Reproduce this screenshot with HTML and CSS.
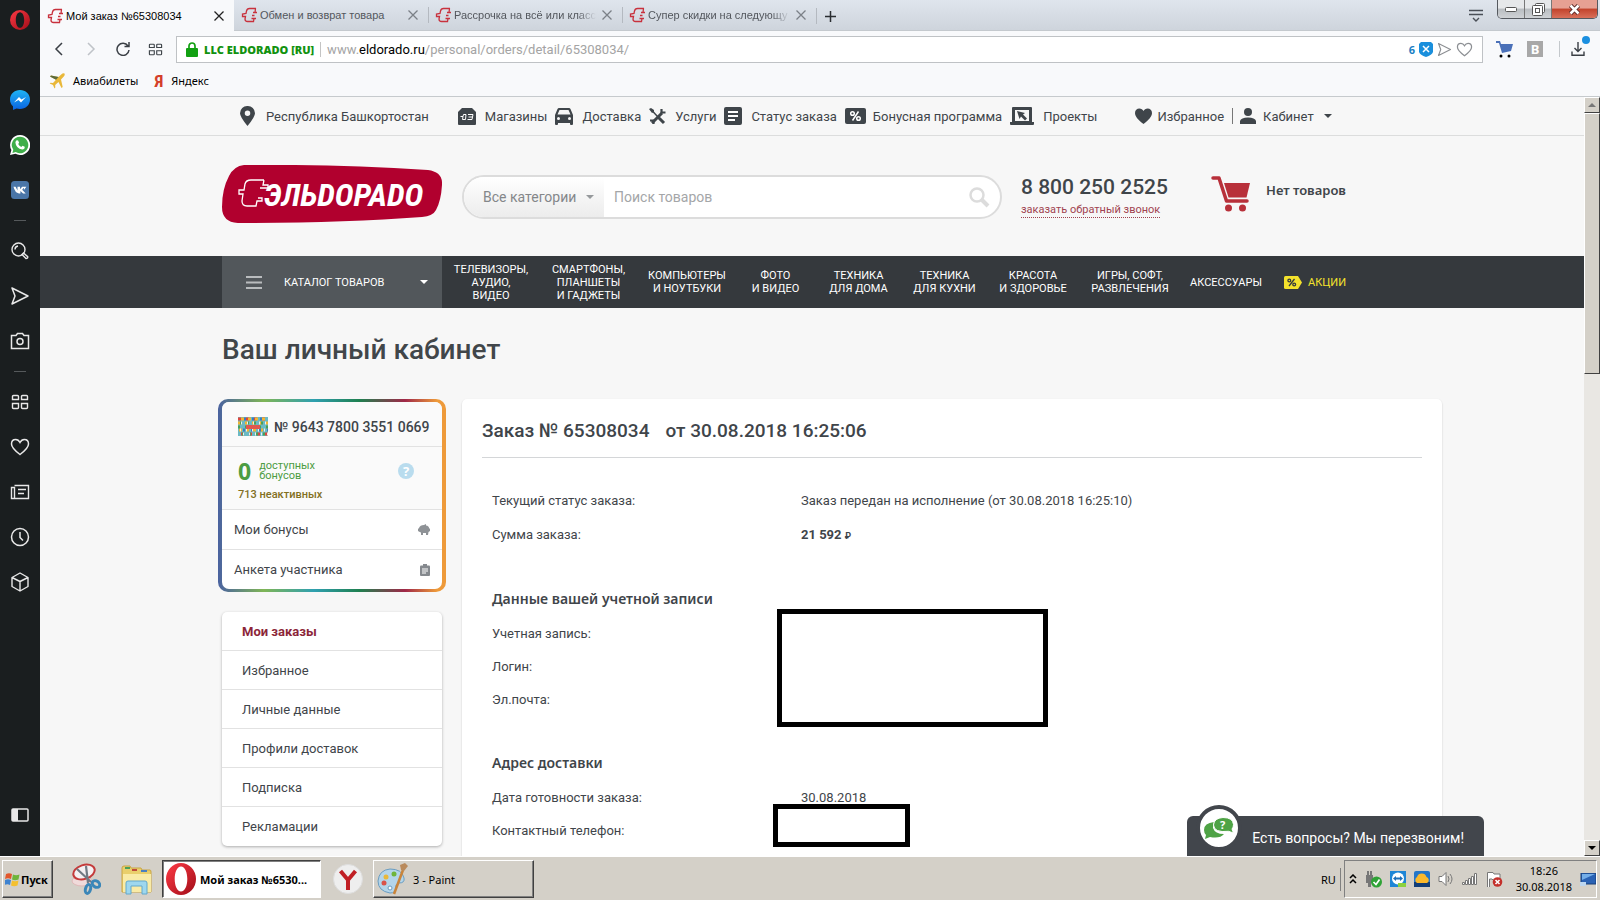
FILE: index.html
```html
<!DOCTYPE html>
<html lang="ru">
<head>
<meta charset="utf-8">
<title>Мой заказ №65308034</title>
<link rel="stylesheet" href="styles.css">
</head>
<body>
<svg class="defs" width="0" height="0" aria-hidden="true">
  <defs>
    <linearGradient id="gOpera" x1="0" y1="0" x2="1" y2="1"><stop offset="0" stop-color="#ff3a45"/><stop offset="1" stop-color="#a00d18"/></linearGradient>
    <linearGradient id="gMsg" x1="0" y1="0" x2="0" y2="1"><stop offset="0" stop-color="#1fb4f5"/><stop offset="1" stop-color="#0a62e0"/></linearGradient>
    <symbol id="opera" viewBox="0 0 20 20"><path fill="url(#gOpera)" fill-rule="evenodd" d="M10 0a10 10 0 1 0 0 20a10 10 0 1 0 0-20zM10 2.200c2.600 0 4.200 3.600 4.200 7.800s-1.600 7.800-4.200 7.800s-4.200-3.600-4.200-7.800s1.600-7.800 4.200-7.800z"/></symbol>
    <symbol id="plug" viewBox="0 0 17 16"><path fill="none" stroke="#c8313d" stroke-width="1.300" d="M15 1.500H8.500Q6 1.500 5.500 4L5 6.500L1.500 7V9.500H4.500L4 12Q4 14.500 6.500 14.500H12.500L13 11.500H15M13 11.500H10.500M12 5.500H16M14.500 1.500L14 5.500M13.500 8.500H11"/></symbol>
    <symbol id="cross" viewBox="0 0 12 12"><path fill="none" stroke="currentColor" stroke-width="1.300" d="M1.500 1.500l9 9m0-9l-9 9"/></symbol>
    <symbol id="grid4" viewBox="0 0 18 16"><path fill="none" stroke="currentColor" stroke-width="1.400" d="M2.500 1.500h4q1 0 1 1v3h-6v-3q0-1 1-1zM11.500 1.500h4q1 0 1 1v3h-6v-3q0-1 1-1zM1.500 9.500h6v4q0 1-1 1h-4q-1 0-1-1zM10.500 9.500h6v4q0 1-1 1h-4q-1 0-1-1z"/></symbol>
    <symbol id="send" viewBox="0 0 20 20"><path fill="none" stroke="currentColor" stroke-width="1.500" stroke-linejoin="round" d="M2 2l16 8l-16 8l3-8z"/></symbol>
    <symbol id="heart" viewBox="0 0 20 18"><path fill="none" stroke="currentColor" stroke-width="1.500" d="M10 16.500C4 12 1.500 9.500 1.500 6C1.500 3 3.500 1.500 5.700 1.500C8 1.500 9.200 3 10 4.500C10.800 3 12 1.500 14.300 1.500C16.500 1.500 18.500 3 18.500 6C18.500 9.500 16 12 10 16.500z"/></symbol>
    <symbol id="heartFull" viewBox="0 0 17 16"><path fill="currentColor" d="M8.500 16C3 11.500 0 8.500 0 5C0 2 2 .5 4.300 .5C6.300 .5 7.700 1.500 8.500 3C9.300 1.500 10.700 .5 12.700 .5C15 .5 17 2 17 5C17 8.500 14 11.500 8.500 16z"/></symbol>
  </defs>
</svg>
<div class="desktop">
  <div class="browser">
    <aside class="rail">
      <button class="slot slot-top" aria-label="Opera"><svg width="20" height="20"><use href="#opera"/></svg></button>
      <button class="slot" aria-label="Messenger"><svg width="20" height="20" viewBox="0 0 20 20"><path fill="url(#gMsg)" d="M10 0C4.400 0 0 4 0 9.500c0 3 1 5 3 6.800V20l3.500-1.500c1 .3 2.200.5 3.500.5c5.600 0 10-4 10-9.500S15.600 0 10 0z"/><path fill="#fff" d="M4 12.500L9 7l2.500 2.500L16 7l-5 5.500L8.500 10z"/></svg></button>
      <button class="slot" aria-label="WhatsApp"><svg width="20" height="20" viewBox="0 0 20 20"><path fill="#fff" d="M10 0a10 10 0 1 1-4.600 18.800L0 20l1.400-5A10 10 0 0 1 10 0z"/><path fill="#3fae49" d="M10 1.700a8.300 8.300 0 1 1-4.300 15.400L2.400 17.900l.9-3.100A8.300 8.300 0 0 1 10 1.700z"/><path fill="#fff" d="M6.800 5.300l1.300.1l1 2.300l-.9 1.300q1 2 3.100 2.900l1.200-1.200l2.200 1.100q.2 2.600-2.500 2.700Q6 13.500 5.400 7.500q.3-1.600 1.400-2.200z"/></svg></button>
      <button class="slot" aria-label="VK"><svg width="18" height="18" viewBox="0 0 18 18"><rect width="18" height="18" rx="3.500" fill="#4a76a8"/><path fill="#fff" d="M2.500 5.800h2l2 3.700V5.800H9v2.500l2.200-2.500h2.300l-2.300 3l3.500 3.600h-2.600L9.400 10.100v2.300H8Q4 12 2.500 5.800zM13 5.800h2.400l-2.500 3.300z"/></svg></button>
      <span class="rail-line"></span>
      <button class="slot" aria-label="Поиск"><svg width="18" height="18" viewBox="0 0 18 18" fill="none" stroke="#e8e8e8" stroke-width="1.400"><circle cx="7.500" cy="7.500" r="6.500"/><path d="M4 7.500Q4 4.500 7 4M11 12.500l4 4q2 0 1.700-1.800L12.500 11z"/></svg></button>
      <button class="slot" aria-label="Моя лента"><svg width="20" height="20"><use href="#send"/></svg></button>
      <button class="slot" aria-label="Снимок"><svg width="20" height="18" viewBox="0 0 20 18" fill="none" stroke="#e8e8e8" stroke-width="1.500"><path d="M1.500 3.500H6L7.500 1.500h5L14 3.500h4.500v13h-17z"/><circle cx="10" cy="9.500" r="3"/></svg></button>
      <span class="rail-line"></span>
      <button class="slot" aria-label="Экспресс-панель"><svg width="18" height="16"><use href="#grid4"/></svg></button>
      <button class="slot" aria-label="Закладки"><svg width="20" height="18"><use href="#heart"/></svg></button>
      <button class="slot" aria-label="Новости"><svg width="20" height="16" viewBox="0 0 20 16" fill="none" stroke="#e8e8e8" stroke-width="1.400"><path d="M4.500 1.500h14v13h-17v-11h3v11M8 5.500h8M8 9.500h6"/></svg></button>
      <button class="slot" aria-label="История"><svg width="20" height="20" viewBox="0 0 20 20" fill="none" stroke="#e8e8e8" stroke-width="1.500"><circle cx="10" cy="10" r="8.500"/><path d="M10 5v5.500l3 3"/></svg></button>
      <button class="slot" aria-label="Расширения"><svg width="20" height="20" viewBox="0 0 20 20" fill="none" stroke="#e8e8e8" stroke-width="1.400" stroke-linejoin="round"><path d="M10 1l8 4.500v9L10 19l-8-4.500v-9zM2 5.500l8 4l8-4M10 9.500V19"/></svg></button>
      <button class="slot slot-bottom" aria-label="Боковая панель"><svg width="18" height="14" viewBox="0 0 18 14"><rect x="1" y="1" width="16" height="12" rx="1" fill="none" stroke="#e8e8e8" stroke-width="1.500"/><path fill="#e8e8e8" d="M1 1h6v12H1z"/></svg></button>
    </aside>
    <div class="window">
      <header class="tabs">
        <div class="tab tab-on"><svg width="17" height="16"><use href="#plug"/></svg><span class="tab-name">Мой заказ №65308034</span><button class="tab-x" aria-label="Закрыть"><svg width="12" height="12"><use href="#cross"/></svg></button></div>
        <div class="tab"><svg width="17" height="16"><use href="#plug"/></svg><span class="tab-name">Обмен и возврат товара</span><button class="tab-x" aria-label="Закрыть"><svg width="12" height="12"><use href="#cross"/></svg></button></div>
        <div class="tab tab-line"><svg width="17" height="16"><use href="#plug"/></svg><span class="tab-name tab-fade">Рассрочка на всё или класс</span><button class="tab-x" aria-label="Закрыть"><svg width="12" height="12"><use href="#cross"/></svg></button></div>
        <div class="tab tab-line"><svg width="17" height="16"><use href="#plug"/></svg><span class="tab-name tab-fade">Супер скидки на следующу</span><button class="tab-x" aria-label="Закрыть"><svg width="12" height="12"><use href="#cross"/></svg></button></div>
        <button class="tab-add" aria-label="Новая вкладка"><svg width="11" height="11" viewBox="0 0 11 11"><path stroke="#2a2d31" stroke-width="1.500" d="M5.500 0v11M0 5.500h11"/></svg></button>
        <button class="tab-menu" aria-label="Меню вкладок"><svg width="14" height="13" viewBox="0 0 14 13" fill="none" stroke="#4a4f57" stroke-width="1.400"><path d="M0 1.500h14M0 5.500h14M4 9l3 3l3-3"/></svg></button>
        <div class="win-controls">
          <button class="wc" aria-label="Свернуть"><svg width="12" height="5" viewBox="0 0 12 5"><rect x=".5" y=".5" width="11" height="4" rx="1" fill="#fff" stroke="#555"/></svg></button>
          <button class="wc" aria-label="Развернуть"><svg width="13" height="13" viewBox="0 0 13 13" fill="#fff" stroke="#555"><rect x="3.500" y=".5" width="9" height="9" rx="1"/><rect x=".5" y="2.500" width="10" height="10" rx="1"/><rect x="3.500" y="5.500" width="4" height="4"/></svg></button>
          <button class="wc wc-close" aria-label="Закрыть окно"><svg width="13" height="11" viewBox="0 0 13 11"><path stroke="#5c2a28" stroke-width="4.500" d="M2.500 1.500l8 8m0-8l-8 8"/><path stroke="#fff" stroke-width="2.500" d="M2.500 1.500l8 8m0-8l-8 8"/></svg></button>
        </div>
      </header>
      <div class="address-row">
        <div class="nav-buttons">
          <button aria-label="Назад"><svg width="10" height="14" viewBox="0 0 10 14"><path fill="none" stroke="#3a3f45" stroke-width="1.500" d="M8 1L2 7l6 6"/></svg></button>
          <button aria-label="Вперёд"><svg width="10" height="14" viewBox="0 0 10 14"><path fill="none" stroke="#bfc3c8" stroke-width="1.500" d="M2 1l6 6l-6 6"/></svg></button>
          <button aria-label="Обновить"><svg width="14" height="14" viewBox="0 0 14 14"><path fill="none" stroke="#3a3f45" stroke-width="1.500" d="M12 4A6 6 0 1 0 13 8M13 0v4.500H8.500"/></svg></button>
          <button aria-label="Экспресс"><svg width="15" height="13"><use href="#grid4"/></svg></button>
        </div>
        <div class="url">
          <svg width="12" height="15" viewBox="0 0 12 15"><path fill="none" stroke="#12a012" stroke-width="1.700" d="M3 7V4a3 3 0 0 1 6 0v3"/><rect y="6" width="12" height="9" rx="1" fill="#12a012"/></svg>
          <span class="cert">LLC ELDORADO [RU]</span>
          <span class="url-text">www.<b>eldorado.ru</b>/personal/orders/detail/65308034/</span>
          <span class="url-tools">
            <span class="blocked">6</span>
            <svg width="14" height="15" viewBox="0 0 14 15"><path fill="#1a8fdc" d="M2 0h10l2 2v8q-1 3-7 5Q1 13 0 10V2z"/><path stroke="#fff" stroke-width="1.500" d="M4 4l6 6m0-6l-6 6"/></svg>
            <svg class="grey" width="15" height="15"><use href="#send"/></svg>
            <svg class="grey" width="17" height="15"><use href="#heart"/></svg>
          </span>
        </div>
        <div class="ext">
          <svg width="17" height="17" viewBox="0 0 17 17"><path fill="#4a70b8" d="M0 0h4l1 3h12l-2 7L6 12L3 2H0z"/><circle cx="5" cy="15" r="1.500"/><circle cx="13" cy="15" r="1.500"/></svg>
          <span class="ext-b">B</span>
          <span class="ext-line"></span>
          <span class="dl"><svg width="14" height="14" viewBox="0 0 14 14" fill="none" stroke="#3a3f45" stroke-width="1.400"><path d="M7 0v9M3.500 6L7 9.500L10.500 6M1 9.500v3.800h12V9.500"/></svg><i class="dot"></i></span>
        </div>
      </div>
      <nav class="bookmarks">
        <a href="#"><svg width="16" height="16" viewBox="0 0 16 16"><path fill="#e9b83a" d="M15.500.5q-1.500-.8-3 .7L9.500 4L2 2.500L1 3.500l6 3.200l-3 3.300l-2.500-.2l-.8.8L4 12l1.500 3.400l.8-.8L6.200 12L9.500 9l3 6l1.200-1L12 6.500l2.800-3Q16.200 2 15.500.5z"/><path fill="#5b6b3c" d="M9.500 4L2 2.500l-1 1l6 3.200z"/></svg>Авиабилеты</a>
        <a href="#"><span class="ya">Я</span>Яндекс</a>
      </nav>
      <div class="viewport">
        <div class="page">
          <div class="topbar">
            <a href="#" class="city"><svg width="15" height="20" viewBox="0 0 15 20"><path fill="#3f454a" fill-rule="evenodd" d="M7.500 0A7.300 7.300 0 0 1 15 7.300Q15 11 7.500 20Q0 11 0 7.300A7.300 7.300 0 0 1 7.500 0zM7.500 4.500a2.700 2.700 0 1 0 0 5.500a2.700 2.700 0 1 0 0-5.500z"/></svg>Республика Башкортостан</a>
            <a href="#"><svg width="18" height="17" viewBox="0 0 18 17"><path fill="#3f454a" d="M4 0h10l4 4v12q0 1-1 1H1q-1 0-1-1V4z"/><path fill="none" stroke="#fff" d="M8 6.500H5.500L5 8.500H2.500M5 8.500L4.500 11.500H7.500L8 6.500M10 6.500H15L14 11.500H9.500M10.500 9h4"/></svg>Магазины</a>
            <a href="#"><svg width="18" height="17" viewBox="0 0 18 17"><path fill="#3f454a" fill-rule="evenodd" d="M4 0h10q1 0 1.500 1L18 7v9q0 1-1 1h-1q-1 0-1-1v-1H3v1q0 1-1 1H1q-1 0-1-1V7l2.500-6Q3 0 4 0zM4.500 2L2.500 6.500h13L13.500 2zM3.500 9a1.500 1.500 0 1 0 0 3a1.500 1.500 0 1 0 0-3zM14.500 9a1.500 1.500 0 1 0 0 3a1.500 1.500 0 1 0 0-3z"/></svg>Доставка</a>
            <a href="#"><svg width="17" height="17" viewBox="0 0 17 17"><path stroke="#3f454a" stroke-width="3" d="M3 15L13 5M9 9l6 6"/><path stroke="#3f454a" stroke-width="1.500" d="M2 1.500L9 9"/><path fill="none" stroke="#3f454a" stroke-width="2.200" d="M12.500 1v3.500H16.500M1 12.500h3.500V16"/><path fill="#3f454a" d="M0 1l2-1l3 2v2L3 5z"/></svg>Услуги</a>
            <a href="#" class="wide"><svg width="18" height="18" viewBox="0 0 18 18"><rect width="18" height="18" rx="2" fill="#3f454a"/><path stroke="#fff" stroke-width="2" d="M4 5h10M4 9h10M4 13h7"/></svg>Статус заказа</a>
            <a href="#" class="tight"><svg width="21" height="16" viewBox="0 0 21 16"><rect width="21" height="16" rx="2" fill="#3f454a"/><g fill="none" stroke="#fff" stroke-width="1.500"><circle cx="7.500" cy="5.500" r="1.800"/><circle cx="13.500" cy="10.500" r="1.800"/><path d="M13.500 3.500l-6 9"/></g></svg>Бонусная программа</a>
            <a href="#"><svg width="24" height="18" viewBox="0 0 24 18"><path fill="#3f454a" fill-rule="evenodd" d="M3 0h18q1 0 1 1v14h2v2q0 1-1 1H1q-1 0-1-1v-2h2V1q0-1 1-1zM5 3v11h14V3z"/><path fill="#3f454a" d="M7 4l8 2l-2 1.500l4 4l-2 2l-4-4L9.500 12z"/></svg>Проекты</a>
            <a href="#" class="fav"><svg width="17" height="16" class="dark"><use href="#heartFull"/></svg>Избранное</a>
            <a href="#" class="cabinet"><svg width="16" height="16" viewBox="0 0 16 16"><circle cx="8" cy="4" r="4" fill="#3f454a"/><path fill="#3f454a" d="M0 16v-3q1-3.500 8-3.500t8 3.500v3z"/></svg>Кабинет<i class="caret"></i></a>
          </div>
          <div class="masthead">
            <a href="#" class="logo" aria-label="Эльдорадо"><svg width="220" height="58" viewBox="0 0 220 58"><path fill="#b1002e" d="M22 0Q110-1 206 5Q221 7 220 20Q219 36 214 45Q211 51 200 52Q120 58 20 58Q0 59 0 42Q0 24 7 11Q12 1 22 0z"/><path fill="none" stroke="#fff" stroke-width="1.300" d="M42 15H29Q24 15 23 19L22 25H17V29H21L20 36Q20 41 25 41H34L35 36H40V33H36M42 15L41 20H46V23H38"/><text x="42" y="41" fill="#fff" class="logo-text">ЭЛЬDОРАDО</text></svg></a>
            <form class="search">
              <select aria-label="Категория"><option>Все категории</option></select><i class="caret"></i>
              <input type="text" placeholder="Поиск товаров" aria-label="Поиск товаров">
              <button type="button" aria-label="Найти"><svg width="21" height="21" viewBox="0 0 21 21"><circle cx="8" cy="8" r="6.500" fill="none" stroke="#dcdcdc" stroke-width="2.500"/><path stroke="#dcdcdc" stroke-width="4" d="M12.500 12.500l6.500 6.500"/></svg></button>
            </form>
            <div class="phone"><span class="phone-no">8 800 250 2525</span><a href="#">заказать обратный звонок</a></div>
            <a href="#" class="cart"><svg width="39" height="36" viewBox="0 0 39 36"><path fill="none" stroke="#b8303a" stroke-width="3.500" stroke-linejoin="round" stroke-linecap="round" d="M2 2h6L15.500 25H36"/><path fill="#b8303a" d="M13 7h26l-3.500 14.500H17.500z"/><circle cx="17.500" cy="32" r="3.500" fill="#b8303a"/><circle cx="31.500" cy="32" r="3.500" fill="#b8303a"/></svg><span>Нет товаров</span></a>
          </div>
          <nav class="menu">
            <button class="catalog"><svg width="16" height="13" viewBox="0 0 16 13"><path stroke="#b9bcbe" stroke-width="2" d="M0 1h16M0 6.500h16M0 12h16"/></svg><span>КАТАЛОГ ТОВАРОВ</span><i class="caret"></i></button>
            <div class="menu-items">
              <a href="#">ТЕЛЕВИЗОРЫ,<br>АУДИО,<br>ВИДЕО</a>
              <a href="#">СМАРТФОНЫ,<br>ПЛАНШЕТЫ<br>И ГАДЖЕТЫ</a>
              <a href="#">КОМПЬЮТЕРЫ<br>И НОУТБУКИ</a>
              <a href="#">ФОТО<br>И ВИДЕО</a>
              <a href="#">ТЕХНИКА<br>ДЛЯ ДОМА</a>
              <a href="#">ТЕХНИКА<br>ДЛЯ КУХНИ</a>
              <a href="#">КРАСОТА<br>И ЗДОРОВЬЕ</a>
              <a href="#">ИГРЫ, СОФТ,<br>РАЗВЛЕЧЕНИЯ</a>
              <a href="#">АКСЕССУАРЫ</a>
              <a href="#" class="promo"><svg width="18" height="13" viewBox="0 0 18 13"><path fill="#f4e22c" d="M1.500 0H14l4 6.500l-4 6.500H1.500Q0 13 0 11.500v-10Q0 0 1.500 0z"/><g fill="none" stroke="#35393d" stroke-width="1.300"><circle cx="5.300" cy="4.500" r="1.400"/><circle cx="10.200" cy="8.500" r="1.400"/><path d="M10.500 3l-5.500 7"/></g></svg>АКЦИИ</a>
            </div>
          </nav>
          <main class="content">
            <h1>Ваш личный кабинет</h1>
            <div class="columns">
              <div class="side">
                <section class="bonus">
                  <div class="bonus-in">
                    <div class="card-no"><svg width="30" height="19" viewBox="0 0 30 19"><rect width="30" height="19" fill="#6bb9c4"/><g stroke-width="3" fill="none"><path stroke="#e0453d" stroke-dasharray="3 5" d="M0 2h30M3 17h27"/><path stroke="#f2b632" stroke-dasharray="3 4" d="M3 2h27M0 6h30M1 13h29"/><path stroke="#4a9f58" stroke-dasharray="2 5" d="M2 6h28M4 17h26M0 10h30"/><path stroke="#3a7cc0" stroke-dasharray="2 6" d="M5 13h25M6 2h24"/><path stroke="#eee" stroke-dasharray="1 5" d="M3 6h27M5 17h25M2 13h28"/></g><rect x="8" y="8" width="14" height="4" fill="#e0574f"/></svg>№ 9643 7800 3551 0669</div>
                    <div class="points">
                      <div class="points-row"><b class="zero">0</b><span class="avail">доступных<br>бонусов</span><button class="help" aria-label="Справка">?</button></div>
                      <span class="inactive">713 неактивных</span>
                    </div>
                    <a href="#" class="bonus-link">Мои бонусы<svg width="12" height="11" viewBox="0 0 12 11"><path fill="#8e9296" d="M1 4Q2 1 6 1l2-1v1.500Q11 2 11 4l1 1v2l-1.500 1L10 11H8V9H5v2H3V8.500Q1 7.500 0 7V5z"/></svg></a>
                    <a href="#" class="bonus-link">Анкета участника<svg width="10" height="12" viewBox="0 0 10 12"><rect y="1.500" width="10" height="10.500" rx="1" fill="#85898e"/><rect x="3" width="4" height="3" fill="#85898e"/><path stroke="#fff" d="M2 5h6M2 7h6M2 9h4"/></svg></a>
                  </div>
                </section>
                <nav class="side-menu">
                  <a href="#" class="on">Мои заказы</a>
                  <a href="#">Избранное</a>
                  <a href="#">Личные данные</a>
                  <a href="#">Профили доставок</a>
                  <a href="#">Подписка</a>
                  <a href="#">Рекламации</a>
                </nav>
              </div>
              <section class="order">
                <h2><span>Заказ № 65308034</span><span>от 30.08.2018 16:25:06</span></h2>
                <dl class="status">
                  <dt>Текущий статус заказа:</dt><dd>Заказ передан на исполнение (от 30.08.2018 16:25:10)</dd>
                  <dt>Сумма заказа:</dt><dd class="sum">21 592 <small>₽</small></dd>
                </dl>
                <div class="masked">
                  <h3>Данные вашей учетной записи</h3>
                  <dl>
                    <dt>Учетная запись:</dt><dd></dd>
                    <dt>Логин:</dt><dd></dd>
                    <dt>Эл.почта:</dt><dd></dd>
                  </dl>
                  <i class="box box-account"></i>
                </div>
                <div class="masked">
                  <h3>Адрес доставки</h3>
                  <dl>
                    <dt>Дата готовности заказа:</dt><dd>30.08.2018</dd>
                    <dt>Контактный телефон:</dt><dd></dd>
                  </dl>
                  <i class="box box-phone"></i>
                </div>
              </section>
            </div>
          </main>
          <button class="chat"><span class="chat-ring"><svg width="30" height="22" viewBox="0 0 30 22"><path fill="#4ea345" d="M10 5Q0 6 0 13q0 3 2 5l-1 4l5-2q10 2 14-3q-9 0-11-6q0-4 1-6z"/><path fill="#4ea345" stroke="#fff" d="M19 .5q10 0 10.500 7q0 3-1.500 4.500l1.500 4l-5-1.700Q10 16 9.500 8Q10 1 19 .5z"/><text x="16" y="12" class="chat-q">?</text></svg></span>Есть вопросы? Мы перезвоним!</button>
        </div>
        <div class="scroll"><button aria-label="Вверх"><i class="tri up"></i></button><span class="thumb"></span><button class="down" aria-label="Вниз"><i class="tri"></i></button></div>
      </div>
    </div>
  </div>
  <footer class="taskbar">
    <button class="start"><svg width="15" height="15" viewBox="0 0 15 15"><path fill="#e2572c" d="M1 2q3-1.500 6 0L6 7Q3 5.500 0 7z"/><path fill="#6fb53b" d="M8 2.500q3 1.500 6.500 0l-1 5Q10 9 7 7.500z"/><path fill="#3f83d0" d="M0 8q3-1.500 6 0l-1 5q-2.500-1.500-6 0z"/><path fill="#f4c02e" d="M7 8.500q3 1.500 6.500 0l-1 5Q9 15 6 13.500z"/></svg>Пуск</button>
    <button class="quick" aria-label="Ножницы"><svg width="30" height="32" viewBox="0 0 30 32"><ellipse cx="11" cy="18" rx="10" ry="5" fill="#f0dada" stroke="#e0b8b8"/><ellipse cx="13" cy="9" rx="11" ry="7" fill="#f4f0f2" stroke="#c43a3a" stroke-width="2" transform="rotate(-18 13 9)"/><path fill="none" stroke="#707a84" stroke-width="2.200" d="M6 6l14 13M15 3l2 17"/><g fill="none" stroke="#3a86b8" stroke-width="3"><ellipse cx="25" cy="21" rx="4" ry="3" transform="rotate(35 25 21)"/><ellipse cx="17" cy="26" rx="2.500" ry="4.500" transform="rotate(15 17 26)"/></g></svg></button>
    <button class="quick quick-folder" aria-label="Проводник"><svg width="33" height="31" viewBox="0 0 33 31"><path fill="#e9cf6c" stroke="#c9a544" d="M2 4q0-2 2-2h6l1 2h10l1 2h8q1 0 1 2v20H2z"/><path fill="#f9eba6" d="M3 10h28v18H3z"/><path fill="#4aa05a" d="M5 3h5v2H5z"/><path fill="#4a80c0" d="M21 6h6v2h-6z"/><path fill="#c04a3a" d="M12 5h5v2h-5z"/><path fill="#9ed7ee" stroke="#62a8cc" d="M6 19q0-2 2-2h17q2 0 2 2v11h-5v-8H11v8H6z"/></svg></button>
    <button class="task task-on"><svg width="30" height="32" viewBox="0 0 20 20" preserveAspectRatio="none"><use href="#opera"/></svg>Мой заказ №6530...</button>
    <button class="yandex" aria-label="Яндекс.Браузер"><svg width="30" height="30" viewBox="0 0 30 30"><circle cx="15" cy="15" r="14.500" fill="#eee" stroke="#ddd"/><path fill="none" stroke="#c01f24" stroke-width="4" d="M7.500 7L15 16l7.500-9M15 15v11"/></svg></button>
    <button class="task"><svg width="32" height="32" viewBox="0 0 32 32"><path fill="#b4d5ea" stroke="#6a9cc0" d="M13 6q12 0 14 9q1 5-5 5q-4 1-3 5q0 5-6 5Q1 28 1 18Q2 7 13 6z"/><circle cx="9" cy="14" r="2.500" fill="#e9b83a"/><circle cx="17" cy="11" r="2.500" fill="#6fb53b"/><circle cx="7" cy="20" r="2.500" fill="#d9534a"/><circle cx="13" cy="25" r="2" fill="#fff" stroke="#6a9cc0"/><path stroke="#c9843a" stroke-width="2.500" d="M26 7l-9 24"/><path fill="#b98a5c" d="M24 7l-1-5l5-2l3 3l-4 5z"/></svg>3 - Paint</button>
    <span class="lang">RU</span>
    <div class="tray">
      <svg width="8" height="10" viewBox="0 0 8 10"><path fill="none" stroke="#000" stroke-width="1.500" d="M1 4l3-3l3 3M1 9l3-3l3 3"/></svg>
      <svg width="17" height="17" viewBox="0 0 17 17"><path fill="#777" d="M1 4h7v8H6v4H3v-4H1zM2 0h2v4H2zM5 0h2v4H5z"/><circle cx="11.500" cy="11" r="5.500" fill="#2fa336"/><path fill="none" stroke="#fff" stroke-width="1.700" d="M8.500 11l2.500 2.500l3.500-5"/></svg>
      <svg width="16" height="16" viewBox="0 0 16 16"><rect width="16" height="16" fill="#1f86d6"/><circle cx="8" cy="7.500" r="6" fill="#fff"/><path fill="#1f6fb8" d="M3 7.500L6 5v1.500h4V5l3 2.500L10 10V8.500H6V10z"/><path fill="#8bd13f" d="M8 12h8v4H8z"/></svg>
      <svg width="16" height="16" viewBox="0 0 16 16"><rect width="16" height="16" rx="2" fill="#2476c8"/><path fill="#123e78" d="M0 11h16v5H0z"/><path fill="#fbb92c" d="M3 12a3.500 3.500 0 0 1 0-6a5 5 0 0 1 9.500 0A3.300 3.300 0 0 1 13 12z"/></svg>
      <svg width="16" height="14" viewBox="0 0 16 14" fill="none" stroke="#777"><path fill="#fff" d="M1 4.500h3L8 .5v13L4 9.500H1z"/><path d="M10 4q2 3 0 6M12 2q4 5 0 10"/></svg>
      <svg width="16" height="12" viewBox="0 0 16 12" fill="#fff" stroke="#777"><path d="M.5 9.500h2v2h-2zM3.500 7.500h2v4h-2zM6.500 5.500h2v6h-2zM9.500 3.500h2v8h-2zM12.500 .5h2v11h-2z"/></svg>
      <svg width="17" height="16" viewBox="0 0 17 16"><path fill="#fff" stroke="#777" d="M1.500 16V1.500H7l1 1.500h6v6H7L6 8H3.500v8"/><circle cx="11.500" cy="11" r="4.800" fill="#c4302b"/><path stroke="#fff" stroke-width="1.600" d="M9.500 9l4 4m0-4l-4 4"/></svg>
      <span class="clock">18:26<br>30.08.2018</span>
      <svg width="16" height="13" viewBox="0 0 16 13"><rect x="1" width="15" height="11" fill="#2a62b4" stroke="#173e78"/><path fill="#74aee8" d="M2 1h13L2 7z"/><rect y="9" width="6" height="4" fill="#bcd6f0"/></svg>
    </div>
  </footer>
</div>
</body>
</html>
```
FILE: styles.css
```css
* { box-sizing: border-box; }
body { margin: 0; font-family: Roboto, "Liberation Sans", sans-serif; font-size: 14px; color: #3f454a; }
button { border: 0; padding: 0; background: none; font: inherit; color: inherit; }
a { color: inherit; text-decoration: none; }
h1, h2, h3, dl, dd { margin: 0; }
svg { flex: none; display: block; }
.defs { position: absolute; }
.desktop { height: 100vh; display: flex; flex-direction: column; overflow: hidden; }
.browser { flex: 1; min-height: 0; display: flex; }

.rail { width: 40px; flex: none; background: #1a1e1f; color: #e8e8e8; display: flex; flex-direction: column; align-items: center; }
.slot { flex: none; width: 40px; height: 45px; display: flex; align-items: center; justify-content: center; }
.slot-top { height: 40px; margin-bottom: 37px; }
.slot-bottom { margin-top: auto; margin-bottom: 19px; }
.rail-line { flex: none; width: 12px; height: 1px; margin: 8px 0 7px; background: #55595b; }

.window { flex: 1; min-width: 0; display: flex; flex-direction: column; background: #f8f9fb; }
.tabs { height: 31px; flex: none; display: flex; background: linear-gradient(#dfe5ed, #ced4dc); border-bottom: 1px solid #c4c9ce; font-family: "Liberation Sans", sans-serif; font-size: 11px; color: #53575d; }
.tab { width: 194px; flex: none; display: flex; align-items: center; gap: 2px; padding: 0 9px 0 6px; border-left: 1px solid transparent; }
.tab-on { background: #f8f9fb; height: 31px; color: #000; }
.tab-line { border-image: linear-gradient(transparent 25%, #b4b9c0 25%, #b4b9c0 75%, transparent 75%) 1; }
.tab-name { flex: 1; min-width: 0; white-space: nowrap; }
.tab-fade { -webkit-mask-image: linear-gradient(90deg, #000 85%, transparent 98%); mask-image: linear-gradient(90deg, #000 85%, transparent 98%); }
.tab-x { color: #7b8087; }
.tab-on .tab-x { color: #222; }
.tab-add { border-left: 1px solid #b4b9c0; height: 16px; margin-top: 8px; padding-left: 8px; }
.tab-menu { margin-left: auto; margin-right: 14px; }
.win-controls { display: flex; height: 19px; margin-right: 2px; border: 1px solid #55595f; border-top: 0; border-radius: 0 0 5px 5px; overflow: hidden; }
.wc { width: 27px; display: flex; align-items: center; justify-content: center; background: linear-gradient(#e6e8ea 45%, #b9bdc1 50%, #cfd2d5); border-right: 1px solid #777; }
.wc-close { width: 45px; border: 0; background: linear-gradient(#e6a093 45%, #c2432c 50%, #d9705a); }

.address-row { height: 36px; flex: none; display: flex; align-items: center; }
.nav-buttons { width: 136px; flex: none; display: flex; padding-left: 3px; }
.nav-buttons button { width: 32px; height: 26px; display: flex; align-items: center; justify-content: center; }
.url { flex: 1; height: 27px; display: flex; align-items: center; gap: 6px; padding: 0 9px 0 9px; background: #fff; border: 1px solid #bfc2c5; }
.cert { color: #12920f; font: 800 11px "Open Sans", sans-serif; padding-right: 6px; border-right: 1px solid #c4c4c4; white-space: nowrap; }
.url-text { flex: 1; font: 13px Roboto, sans-serif; color: #a4a4a4; white-space: nowrap; }
.url-text b { font-weight: 400; color: #000; }
.url-tools { display: flex; align-items: center; gap: 4px; }
.blocked { color: #1a7fc4; font: bold 11px "Noto Sans", sans-serif; }
.grey { color: #8c8f93; }
.ext { width: 117px; flex: none; display: flex; align-items: center; padding-left: 13px; color: #222; }
.ext-b { width: 16px; height: 16px; margin-left: 14px; background: #a8a8a8; color: #fff; font: bold 13px/16px "Noto Sans", sans-serif; text-align: center; }
.ext-line { width: 1px; height: 16px; margin: 0 11px 0 16px; background: #c4c8cc; }
.dl { position: relative; }
.dot { position: absolute; right: -5px; top: -6px; width: 8px; height: 8px; border-radius: 50%; background: #1a8fe0; }
.bookmarks { height: 30px; flex: none; display: flex; align-items: center; gap: 16px; padding: 0 0 2px 9px; border-bottom: 1px solid #c6cacd; font: 11px "Noto Sans", sans-serif; color: #000; }
.bookmarks a { display: flex; align-items: center; gap: 8px; }
.ya { color: #d43f2a; font: bold 17px "Roboto Condensed", "Liberation Sans Narrow", "DejaVu Sans Condensed", sans-serif; }

.viewport { flex: 1; min-height: 0; display: flex; }
.page { flex: 1; min-width: 0; position: relative; overflow: hidden; background: #f7f7f7; display: flex; flex-direction: column; }
.topbar { height: 39px; flex: none; display: flex; align-items: center; gap: 8px; padding: 0 142px 0 200px; border-bottom: 1px solid #dcdddd; white-space: nowrap; font-size: 13px; }
.topbar a { display: flex; align-items: center; gap: 9px; }
.topbar .city { gap: 11px; margin-right: 21px; }
.topbar .tight { gap: 7px; }
.topbar .fav { gap: 5px; margin-left: 30px; }
.topbar .cabinet { border-left: 1px solid #777; padding-left: 7px; gap: 7px; }
.dark { color: #3f454a; }
.caret { display: inline-block; width: 0; height: 0; border: 4px solid transparent; border-top-color: currentColor; border-bottom: 0; }
.cabinet .caret { margin-left: 3px; }

.masthead { height: 120px; flex: none; display: flex; align-items: center; padding: 0 142px 4px 182px; }
.logo { margin-right: 20px; }
.logo-text { font: italic bold 32px "Roboto Condensed", "Liberation Sans Narrow", "DejaVu Sans Condensed", sans-serif; }
.search { flex: 0 1 540px; height: 44px; display: flex; align-items: center; border: 2px solid #dcdcdc; border-radius: 22px; background: #fff; overflow: hidden; margin-top: 6px; }
.search select { width: 140px; height: 40px; border: 0; padding: 0 0 0 19px; appearance: none; background: linear-gradient(#fff, #ececec); color: #84878a; font: 14px Roboto, sans-serif; }
.search .caret { margin-left: -18px; margin-right: 10px; color: #96999c; }
.search input { flex: 1; min-width: 0; height: 40px; border: 0; padding: 0 10px; background: transparent; font: 14px Roboto, sans-serif; }
.search input::placeholder { color: #a4a6a8; opacity: 1; }
.search button { padding-right: 10px; }
.phone { margin-top: 4px; margin-left: 19px; width: 190px; display: flex; flex-direction: column; align-items: flex-start; }
.phone-no { font: 500 21px/26px Roboto, sans-serif; white-space: nowrap; }
.phone a { font-size: 11px; line-height: 14px; margin-top: 3px; color: #a04350; border-bottom: 1px dotted #a04350; white-space: nowrap; }
.cart { display: flex; align-items: center; gap: 16px; font: 600 13px "Noto Sans", sans-serif; white-space: nowrap; }
.cart span { padding-bottom: 8px; }

.menu { height: 52px; flex: none; display: flex; padding: 0 142px 0 182px; background: #35393d; color: #fff; font-size: 11px; line-height: 13px; }
.catalog { width: 220px; flex: none; display: flex; align-items: center; padding: 0 14px 0 24px; background: #52575b; }
.catalog span { flex: 1; text-align: left; padding-left: 22px; }
.menu-items { flex: 1; display: grid; grid-template-columns: 98fr 97fr 100fr 77fr 89fr 83fr 94fr 100fr 92fr 86fr 84fr; align-items: center; text-align: center; white-space: nowrap; }
.menu-items .promo { display: flex; align-items: center; justify-content: center; gap: 6px; color: #f4e22c; }

.content { padding: 24px 142px 0 182px; }
h1 { font: 500 28px/36px Roboto, sans-serif; color: #41464a; }
.columns { display: flex; align-items: flex-start; gap: 20px; margin-top: 31px; }
.side { width: 220px; flex: none; }
.bonus { margin: 0 -4px 20px; padding: 3px 4px; border-radius: 10px; background: linear-gradient(90deg, #4a62a0, #7fb556 20%, #2fa0b0 42%, #1f8050 62%, #a02848 82%, #ee9a3a 96%); }
.bonus-in { border-radius: 7px; background: #fff; overflow: hidden; }
.card-no { height: 45px; display: flex; align-items: center; gap: 6px; padding: 5px 0 0 16px; background: #fafafa; font-weight: 500; border-bottom: 1px solid #e2e2e2; white-space: nowrap; }
.points { height: 63px; padding: 11px 28px 0 16px; background: #fafafa; border-bottom: 1px solid #e2e2e2; }
.points-row { display: flex; align-items: center; gap: 8px; height: 25px; }
.zero { font: bold 23px/24px "Noto Sans", sans-serif; color: #4c9c42; }
.avail { font-size: 11px; line-height: 10px; color: #4c9c42; }
.help { margin-left: auto; width: 16px; height: 16px; border-radius: 50%; background: #b9dcee; color: #fff; font: bold 13px/16px "Noto Sans", sans-serif; }
.inactive { display: block; font-size: 11px; line-height: 13px; margin-top: 5px; font-weight: 500; color: #82701f; }
.bonus-link { height: 40px; display: flex; align-items: center; justify-content: space-between; padding: 0 12px; font-size: 13px; border-bottom: 1px solid #e2e2e2; }
.bonus-link:last-child { height: 39px; border: 0; }
.side-menu { background: #fff; border-radius: 5px; box-shadow: 0 1px 3px rgba(0, 0, 0, .3); }
.side-menu a { display: flex; align-items: center; height: 39px; padding-left: 20px; font-size: 13px; border-bottom: 1px solid #e2e2e2; }
.side-menu a:last-child { border: 0; }
.side-menu .on { font-weight: 700; color: #8c2639; }
.order { flex: 1; min-width: 0; background: #fff; border-radius: 5px; box-shadow: 0 1px 2px rgba(0, 0, 0, .2); padding: 0 20px 60px; font-size: 13px; }
h2 { display: flex; gap: 16px; height: 59px; align-items: center; padding-top: 4px; font: 500 19px Roboto, sans-serif; border-bottom: 1px solid #d4d6d8; }
.order dl { display: grid; grid-template-columns: 309px 1fr; grid-auto-rows: 33px; align-items: center; padding-left: 10px; }
.order .status { padding-top: 25px; grid-auto-rows: 34px; }
.sum { font-weight: 700; }
.sum small { font-size: 9px; }
.masked { position: relative; padding-top: 34px; }
.masked + .masked { padding-top: 33px; }
h3 { padding-left: 10px; font: 600 14px/28px "Noto Sans", sans-serif; margin-bottom: 4px; }
.box { position: absolute; border: 5px solid #000; background: #fff; }
.box-account { left: 295px; top: 58px; width: 271px; height: 118px; }
.box-phone { left: 291px; top: 88px; width: 137px; height: 43px; }

.chat { position: absolute; right: 100px; bottom: 0; height: 40px; padding: 4px 20px 0 65px; border-radius: 6px 6px 0 0; background: #42464c; color: #fff; font-size: 14px; white-space: nowrap; }
.chat-ring { position: absolute; left: 9px; top: -11px; width: 46px; height: 46px; border: 4px solid #42464c; border-radius: 50%; background: #fff; display: flex; align-items: center; justify-content: center; }
.chat-q { font: bold 11px "Noto Sans", sans-serif; fill: #fff; }

.scroll { width: 16px; flex: none; display: flex; flex-direction: column; background: #e9e7e3; }
.scroll button, .thumb { background: #d4d0c8; border: 1px solid; border-color: #fff #404040 #404040 #fff; }
.scroll button { height: 16px; flex: none; display: flex; align-items: center; justify-content: center; }
.thumb { height: 261px; }
.scroll .down { margin-top: auto; }
.tri { border: 4px solid transparent; border-top-color: #000; border-bottom: 0; }
.tri.up { border-top: 0; border-bottom: 4px solid #777; }

.taskbar { height: 44px; flex: none; display: flex; align-items: center; padding: 1px 3px 0 2px; background: #d4d0c8; border-top: 1px solid #fff; color: #000; font: 11px "Noto Sans", sans-serif; white-space: nowrap; }
.start, .task { height: 38px; display: flex; align-items: center; border: 1px solid; border-color: #fff #404040 #404040 #fff; box-shadow: inset -1px -1px #808080; }
.start { width: 51px; gap: 1px; padding-left: 2px; font-weight: 700; }
.quick { margin-left: 18px; }
.quick-folder { margin-left: 19px; }
.task { width: 161px; gap: 4px; padding-left: 3px; margin-left: 10px; }
.task-on { width: 159px; margin-left: 9px; background: #fff; border-color: #404040 #fff #fff #404040; box-shadow: inset 1px 1px #808080; font-weight: 700; }
.yandex { margin-left: 12px; }
.lang { margin-left: auto; padding: 4px 4px 4px 0; border-right: 1px solid #808080; }
.tray { height: 38px; margin-left: 3px; display: flex; align-items: center; gap: 8px; padding: 0 0 0 4px; border: 1px solid; border-color: #808080 #fff #fff #808080; }
.clock { margin-left: 5px; line-height: 16px; text-align: center; }
```
